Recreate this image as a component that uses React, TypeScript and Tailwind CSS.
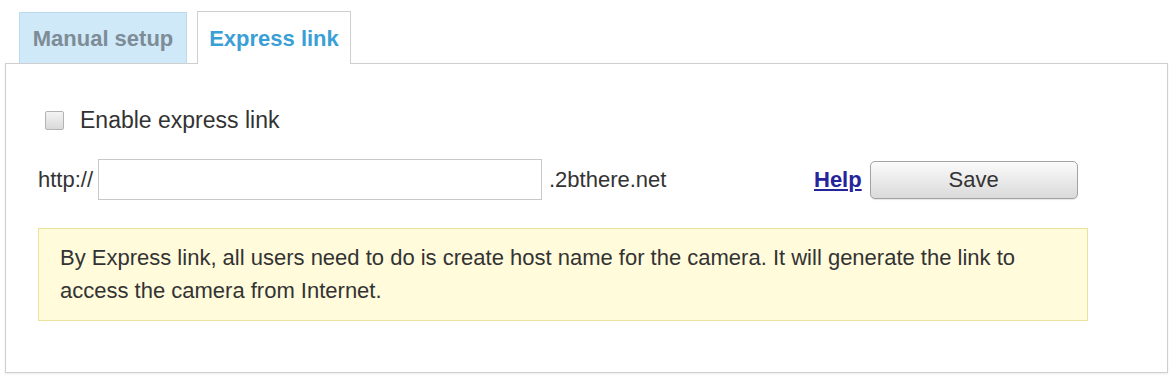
import React from "react";

export default function App() {
  return (
    <div
      className="w-[1173px] h-[379px] bg-white pl-[5px] pt-[11px] text-[22px] text-[#333]"
      style={{ fontFamily: '"Liberation Sans", Arial, sans-serif' }}
    >
      <div className="flex items-end gap-[10px] ml-[14px] h-[52px]">
        <div className="h-[51px] w-[168px] flex items-center justify-center bg-[#cfe9f8] border border-[#b9dbee] border-b-0 font-bold text-[#7d8c96]">
          Manual setup
        </div>
        <div className="h-[53px] w-[154px] flex items-center justify-center bg-white border border-[#cfcfcf] border-b-0 font-bold text-[#3a9fd6] relative z-10 mb-[-1px]">
          Express link
        </div>
      </div>
      <div className="w-[1163px] h-[310px] border border-[#cfcfcf] shadow-[0_1px_2px_rgba(0,0,0,0.08)] bg-white pl-[32px] pt-[44px]">
        <div className="flex items-center h-[24px]">
          <div className="ml-[7px] w-[19px] h-[19px] border border-[#b3b3b3] rounded-[2px] bg-gradient-to-b from-[#f4f4f4] to-[#d9d9d9]" />
          <span className="ml-[16px] leading-none text-[23px]">Enable express link</span>
        </div>
        <div className="flex items-center mt-[27px] h-[41px]">
          <span className="w-[60px] leading-none">http://</span>
          <div className="w-[444px] h-[41px] border border-[#c8c8c8] bg-white" />
          <span className="ml-[7px] w-[265px] leading-none">.2bthere.net</span>
          <a className="font-bold underline text-[#25249b] leading-none">Help</a>
          <button className="ml-[8px] w-[208px] h-[38px] rounded-[5px] border border-[#a3a3a3] bg-gradient-to-b from-[#fbfbfb] to-[#dadada] shadow-[0_1px_1px_rgba(0,0,0,0.1)] text-[22px] text-[#333] leading-none">
            Save
          </button>
        </div>
        <div className="mt-[28px] w-[1050px] h-[93px] border border-[#e9e19c] bg-[#fffbdb] pl-[21px] pt-[12px] leading-[33px]">
          By Express link, all users need to do is create host name for the camera. It will generate the link to
          <br />
          access the camera from Internet.
        </div>
      </div>
    </div>
  );
}
